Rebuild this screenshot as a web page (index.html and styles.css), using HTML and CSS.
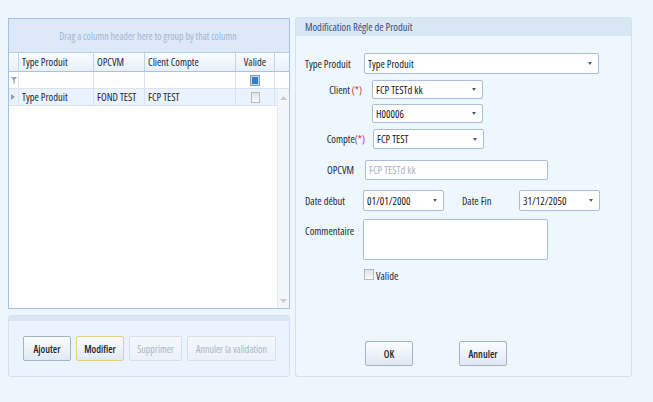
FILE: index.html
```html
<!DOCTYPE html>
<html lang="fr">
<head>
<meta charset="utf-8">
<title>Modification Régle de Produit</title>
<link rel="stylesheet" href="styles.css">
</head>
<body>
<div class="app">
  <div class="left">
    <div class="grid">
      <div class="grouppanel">Drag a column header here to group by that column</div>
      <div class="grow header">
        <div class="c ci"></div>
        <div class="c c1">Type Produit</div>
        <div class="c c2">OPCVM</div>
        <div class="c c3">Client Compte</div>
        <div class="c c4">Valide</div>
        <div class="c c5"></div>
      </div>
      <div class="grow filter">
        <div class="c ci"><svg width="6" height="7" viewBox="0 0 6 7"><path d="M0 0H6L3.6 3V7L2.4 6V3Z" fill="#8ea2bd"/></svg></div>
        <div class="c c1"></div>
        <div class="c c2"></div>
        <div class="c c3"></div>
        <div class="c c4"><span class="chk blue"></span></div>
        <div class="c c5"></div>
      </div>
      <div class="gbody">
        <div class="rows">
          <div class="grow data">
            <div class="c ci"><svg width="4" height="6" viewBox="0 0 4 6"><path d="M0 0L4 3L0 6Z" fill="#8fa0b5"/></svg></div>
            <div class="c c1">Type Produit</div>
            <div class="c c2">FOND TEST</div>
            <div class="c c3">FCP TEST</div>
            <div class="c c4"><span class="chk grey"></span></div>
          </div>
        </div>
        <div class="vscroll">
          <svg width="7" height="4" viewBox="0 0 7 4"><path d="M0 4L3.5 0L7 4Z" fill="#c3cbd5"/></svg>
          <svg width="7" height="4" viewBox="0 0 7 4"><path d="M0 0L3.5 4L7 0Z" fill="#c3cbd5"/></svg>
        </div>
      </div>
    </div>
    <div class="btnpanel">
      <div class="band"></div>
      <div class="btns">
        <button class="btn">Ajouter</button>
        <button class="btn focus">Modifier</button>
        <button class="btn dis w53">Supprimer</button>
        <button class="btn dis w89">Annuler la validation</button>
      </div>
    </div>
  </div>

  <div class="panel">
    <div class="ptitle">Modification Régle de Produit</div>
    <div class="form">
      <div class="row r1">
        <div class="lbl w59">Type Produit</div>
        <div class="sel wtp"><span>Type Produit</span><i class="arr"></i></div>
      </div>
      <div class="row r2">
        <div class="lbl rl w67">Client <span class="req">(*)</span></div>
        <div class="sel wcl"><span>FCP TESTd kk</span><i class="arr"></i></div>
      </div>
      <div class="row r3">
        <div class="sel wcl"><span>H00006</span><i class="arr"></i></div>
      </div>
      <div class="row r4">
        <div class="lbl rl w68">Compte<span class="req">(*)</span></div>
        <div class="sel wcl h20"><span>FCP TEST</span><i class="arr"></i></div>
      </div>
      <div class="row r5">
        <div class="lbl w60 pl22">OPCVM</div>
        <div class="sel wop dis"><span>FCP TESTd kk</span></div>
      </div>
      <div class="row r6">
        <div class="lbl w58">Date début</div>
        <div class="sel wdt"><span>01/01/2000</span><i class="arr"></i></div>
        <div class="lbl w57 ml18">Date Fin</div>
        <div class="sel wdt"><span>31/12/2050</span><i class="arr"></i></div>
      </div>
      <div class="row r7">
        <div class="lbl w58 top">Commentaire</div>
        <div class="area"></div>
      </div>
      <div class="row r8">
        <span class="chk grey big"></span>
        <span class="vlabel">Valide</span>
      </div>
      <div class="row r9">
        <button class="btn">OK</button>
        <button class="btn">Annuler</button>
      </div>
    </div>
  </div>
</div>
</body>
</html>
```
FILE: styles.css
```css
* { box-sizing: border-box; }
html, body { margin: 0; padding: 0; }
body {
  width: 653px;
  height: 402px;
  overflow: hidden;
  background: #edf5fd;
  font-family: "Open Sans", "Liberation Sans", sans-serif;
  font-stretch: condensed;
  font-size: 10.5px;
  color: #1c2634;
}
.app {
  display: flex;
  gap: 5px;
  padding: 17px 0 0 8px;
}

/* ---------- left column ---------- */
.left {
  width: 282px;
  margin-top: 1px;
  display: flex;
  flex-direction: column;
  gap: 6px;
}
.grid {
  height: 291px;
  border: 1px solid #a4c0e2;
  background: #fff;
  display: flex;
  flex-direction: column;
}
.grouppanel {
  height: 33px;
  background: #dde9f7;
  color: #a3b6d0;
  font-size: 10px;
  display: flex;
  align-items: center;
  justify-content: center;
  padding-right: 2px;
}
.grow { display: flex; }
.c {
  border-right: 1px solid #cbdaec;
  display: flex;
  align-items: center;
  padding-left: 3px;
  white-space: nowrap;
}
.ci { width: 10px; padding-left: 2px; }
.c1 { width: 75px; }
.c2 { width: 51px; }
.c3 { width: 91px; }
.c4 { width: 39px; justify-content: center; padding-left: 0; }
.c5 { width: 14px; border-right: 0; }
.header {
  height: 20px;
  background: linear-gradient(#fbfdff, #e6eff9);
  border-top: 1px solid #b7cde8;
  border-bottom: 1px solid #a9c2e0;
}
.header .c { border-right-color: #c2d4ea; }
.filter {
  height: 17px;
  border-bottom: 1px solid #d7e3f1;
}
.filter .c { border-right-color: #dbe6f2; }
.gbody {
  flex: 1;
  display: flex;
}
.rows { flex: 1; }
.data {
  height: 17px;
  background: #eaf2fc;
  border-bottom: 1px solid #d5e2f1;
}
.data .c { border-right-color: #d5e2f1; }
.vscroll {
  width: 12px;
  background: #f2f5f9;
  border-left: 1px solid #e6ebf1;
  display: flex;
  flex-direction: column;
  align-items: center;
  justify-content: space-between;
  padding: 7px 0 5px;
}
.chk {
  display: inline-block;
  width: 10px;
  height: 11px;
  border: 1px solid #8d9aab;
}
.chk.blue {
  background: #2f7fd0;
  box-shadow: inset 0 0 0 1px #c9d6e5;
}
.chk.grey {
  width: 9px;
  height: 11px;
  border-color: #b3bbc5;
  background: linear-gradient(#dfe2e6, #fafbfc);
}

/* ---------- buttons ---------- */
.btnpanel {
  height: 62px;
  border: 1px solid #d3e0ee;
  border-radius: 3px;
  background: #ebf4fe;
  overflow: hidden;
}
.band { height: 5px; background: #d9e5f3; }
.btns {
  display: flex;
  gap: 5px;
  padding: 15px 0 0 14px;
}
.btn {
  font-family: inherit;
  font-stretch: condensed;
  font-size: 10px;
  font-weight: 600;
  color: #1c2430;
  width: 48px;
  height: 25px;
  padding: 0;
  border: 1px solid #a2b4ca;
  border-radius: 2px;
  background: linear-gradient(#fafcfe 0%, #eef3f9 50%, #dfe8f3 100%);
}
.btn.focus { border-color: #e3cf86; }
.btn.dis {
  color: #aab5c3;
  font-weight: 400;
  border-color: #d5dfe9;
  background: linear-gradient(#f4f8fc, #eaf1f8);
}
.btn.w53 { width: 53px; }
.btn.w89 { width: 89px; }

/* ---------- right panel ---------- */
.panel {
  width: 337px;
  height: 360px;
  border: 1px solid #d3e0ed;
  border-radius: 3px;
  background: #eef6fe;
  overflow: hidden;
}
.ptitle {
  height: 18px;
  background: #d9e6f4;
  color: #3a4b7a;
  padding-left: 9px;
  display: flex;
  align-items: center;
}
.form {
  padding: 17px 0 0 9px;
  display: flex;
  flex-direction: column;
}
.row { display: flex; align-items: center; }
.r2 { margin-top: 6px; }
.r3 { margin-top: 5px; padding-left: 67px; }
.r4 { margin-top: 6px; }
.r5 { margin-top: 11px; }
.r6 { margin-top: 10px; }
.r7 { margin-top: 8px; align-items: flex-start; }
.r8 { margin-top: 6px; padding-left: 59px; align-items: flex-end; }
.r9 { margin-top: 61px; padding-left: 60px; gap: 46px; }

.lbl { white-space: nowrap; color: #1f2732; }
.lbl.rl { text-align: right; }
.lbl.top { padding-top: 5px; }
.w57 { width: 57px; }
.w58 { width: 58px; }
.w59 { width: 59px; }
.w60 { width: 60px; }
.w67 { width: 67px; padding-right: 10px; }
.w68 { width: 68px; padding-right: 8px; }
.pl22 { padding-left: 22px; }
.ml18 { margin-left: 18px; }
.req { color: #c2352f; }

.sel {
  height: 19px;
  background: #fff;
  border: 1px solid #a9bed8;
  border-radius: 2px;
  display: flex;
  align-items: center;
  justify-content: space-between;
  padding: 0 6px 0 3px;
  color: #111820;
  white-space: nowrap;
}
.wtp { width: 235px; height: 21px; }
.wcl { width: 111px; }
.h20 { height: 20px; }
.wop { width: 183px; height: 20px; }
.wdt { width: 81px; height: 21px; }
.sel.dis { color: #a9b2bf; }
.arr {
  width: 0;
  height: 0;
  border-left: 2.5px solid transparent;
  border-right: 2.5px solid transparent;
  border-top: 3px solid #4f5d72;
}
.area {
  width: 185px;
  height: 41px;
  background: #fff;
  border: 1px solid #a9bed8;
  border-radius: 2px;
}
.chk.big { width: 10px; height: 11px; }
.vlabel { margin-left: 2px; position: relative; top: 3px; }
```
